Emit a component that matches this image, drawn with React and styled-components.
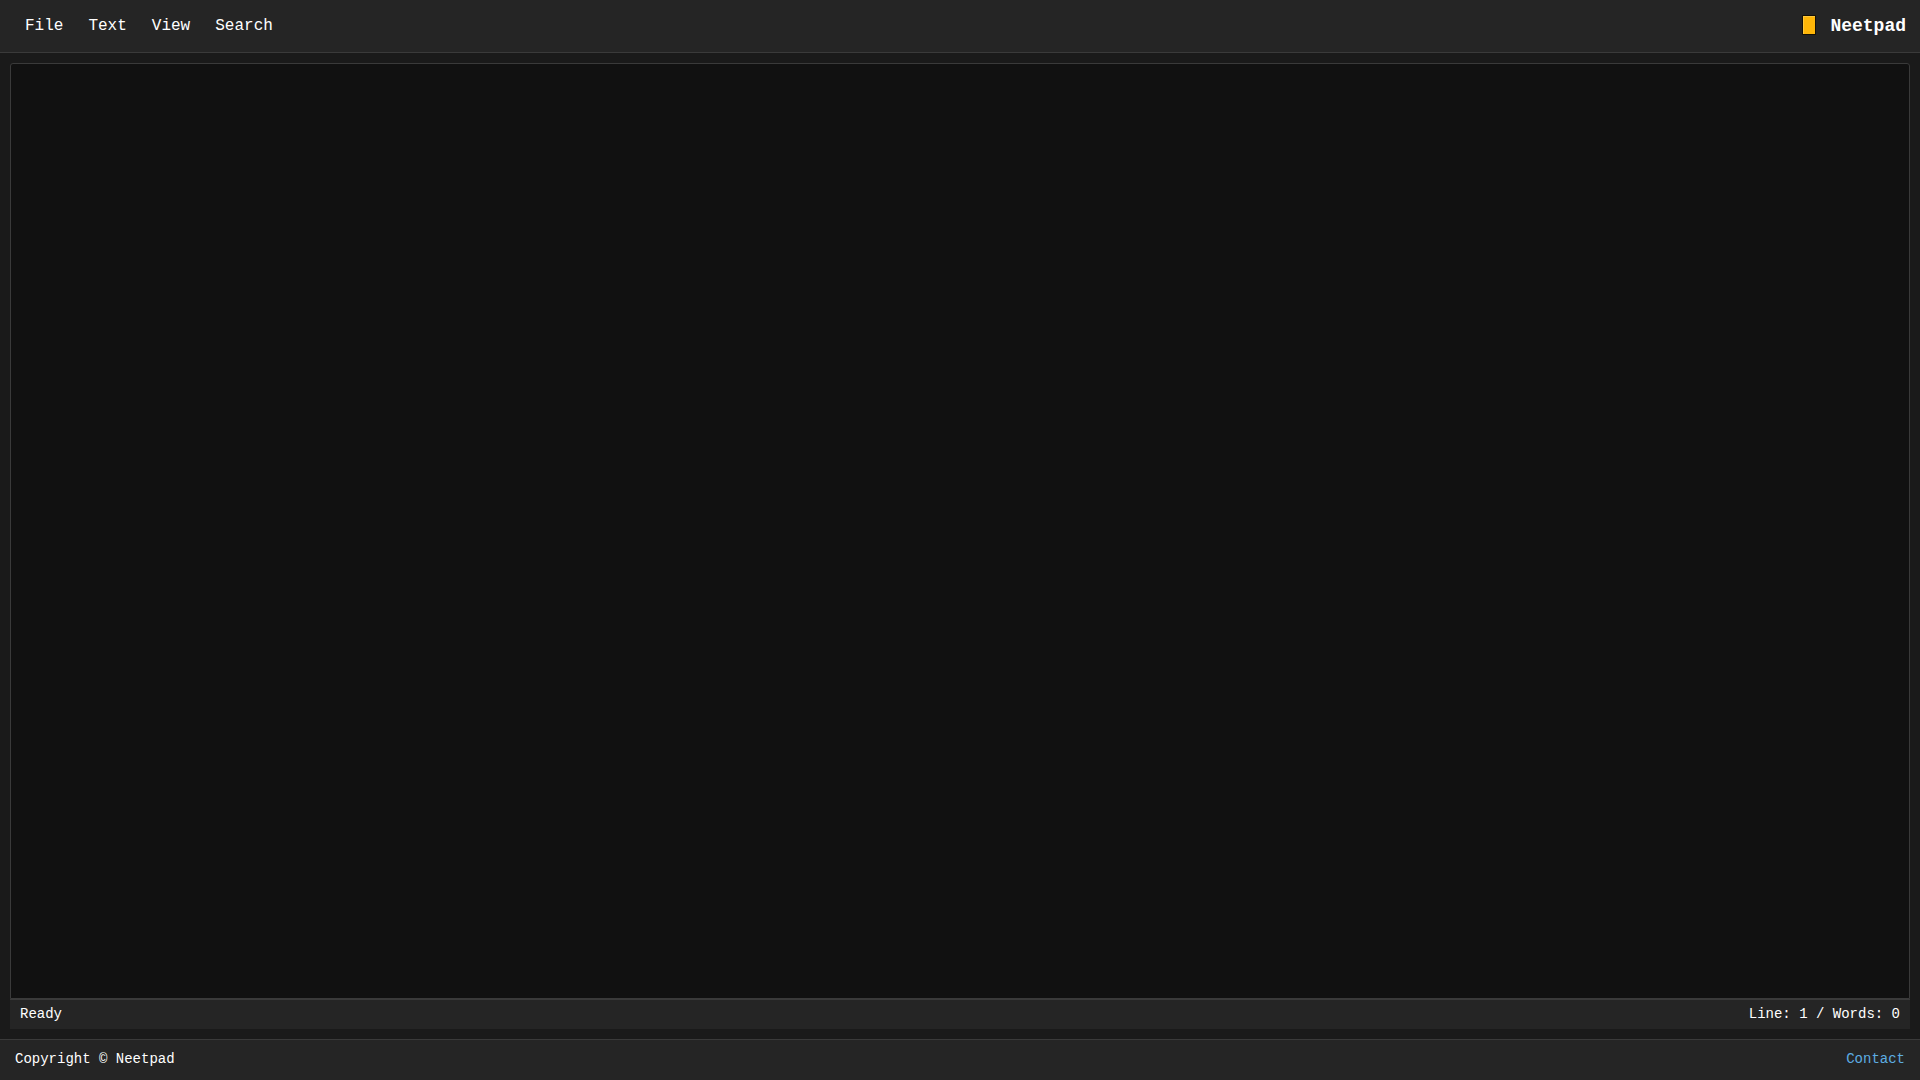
import { useState } from "react";
import styled, { createGlobalStyle } from "styled-components";

const menus = ["File", "Text", "View", "Search"];

const App = () => {
  const [text, setText] = useState("");

  const lines = text.split("\n").length;
  const words = text.split(/\s+/).filter(Boolean).length;

  return (
    <>
      <GlobalStyle />
      <Page>
        <Header>
          <Menu>
            {menus.map((name) => (
              <MenuButton key={name} type="button">
                {name}
              </MenuButton>
            ))}
          </Menu>
          <Brand>
            <Logo viewBox="0 0 14 22" aria-hidden="true">
              <rect width="14" height="20" rx="1" fill="#151005" />
              <rect x="1" y="1" width="12" height="18" fill="#ffb608" />
              <path d="M1 1h12v1H2v17H1z" fill="#ffc83a" />
            </Logo>
            Neetpad
          </Brand>
        </Header>

        <Main>
          <Editor
            aria-label="Document"
            spellCheck={false}
            value={text}
            onChange={(e) => setText(e.target.value)}
          />
          <StatusBar>
            <span>Ready</span>
            <span>
              Line: {lines} / Words: {words}
            </span>
          </StatusBar>
        </Main>

        <Footer>
          <span>Copyright © Neetpad</span>
          <ContactLink href="#contact">Contact</ContactLink>
        </Footer>
      </Page>
    </>
  );
};

export default App;

const GlobalStyle = createGlobalStyle`
  * {
    box-sizing: border-box;
  }

  body {
    margin: 0;
    background-color: #1a1a1a;
    color: #fff;
    font-family: "Courier New", "Liberation Mono", monospace;
  }
`;

const Page = styled.div`
  display: flex;
  flex-direction: column;
  height: 100vh;
`;

const Header = styled.header`
  display: flex;
  justify-content: space-between;
  align-items: center;
  padding: 8px 14px 8px 13px;
  background-color: #252525;
  border-bottom: 1px solid #3a3a3a;
`;

const Menu = styled.nav`
  display: flex;
  gap: 1px;
`;

const MenuButton = styled.button`
  padding: 8px 12px;
  border: none;
  background: none;
  color: inherit;
  font-family: inherit;
  font-size: 16px;
  line-height: 20px;
  cursor: pointer;

  &:hover {
    background-color: #3a3a3a;
  }
`;

const Brand = styled.div`
  display: flex;
  align-items: center;
  gap: 14px;
  font-size: 18px;
  line-height: 20px;
  font-weight: bold;
`;

const Logo = styled.svg`
  width: 14px;
  height: 22px;
`;

const Main = styled.main`
  flex: 1;
  display: flex;
  flex-direction: column;
  min-height: 0;
  padding: 10px;
`;

const Editor = styled.textarea`
  flex: 1;
  padding: 10px;
  border: 1px solid #3a3a3a;
  border-radius: 3px 3px 0 0;
  background-color: #111;
  color: inherit;
  font-family: inherit;
  font-size: 16px;
  resize: none;
  outline: none;
`;

const StatusBar = styled.div`
  display: flex;
  justify-content: space-between;
  padding: 5px 10px;
  border-top: 1px solid #3a3a3a;
  background-color: #252525;
  font-size: 14px;
  line-height: 19px;
`;

const Footer = styled.footer`
  display: flex;
  justify-content: space-between;
  padding: 10px 15px 11px;
  border-top: 1px solid #3a3a3a;
  background-color: #252525;
  font-size: 14px;
  line-height: 19px;
`;

const ContactLink = styled.a`
  color: #5dade2;
  text-decoration: none;

  &:hover {
    text-decoration: underline;
  }
`;
